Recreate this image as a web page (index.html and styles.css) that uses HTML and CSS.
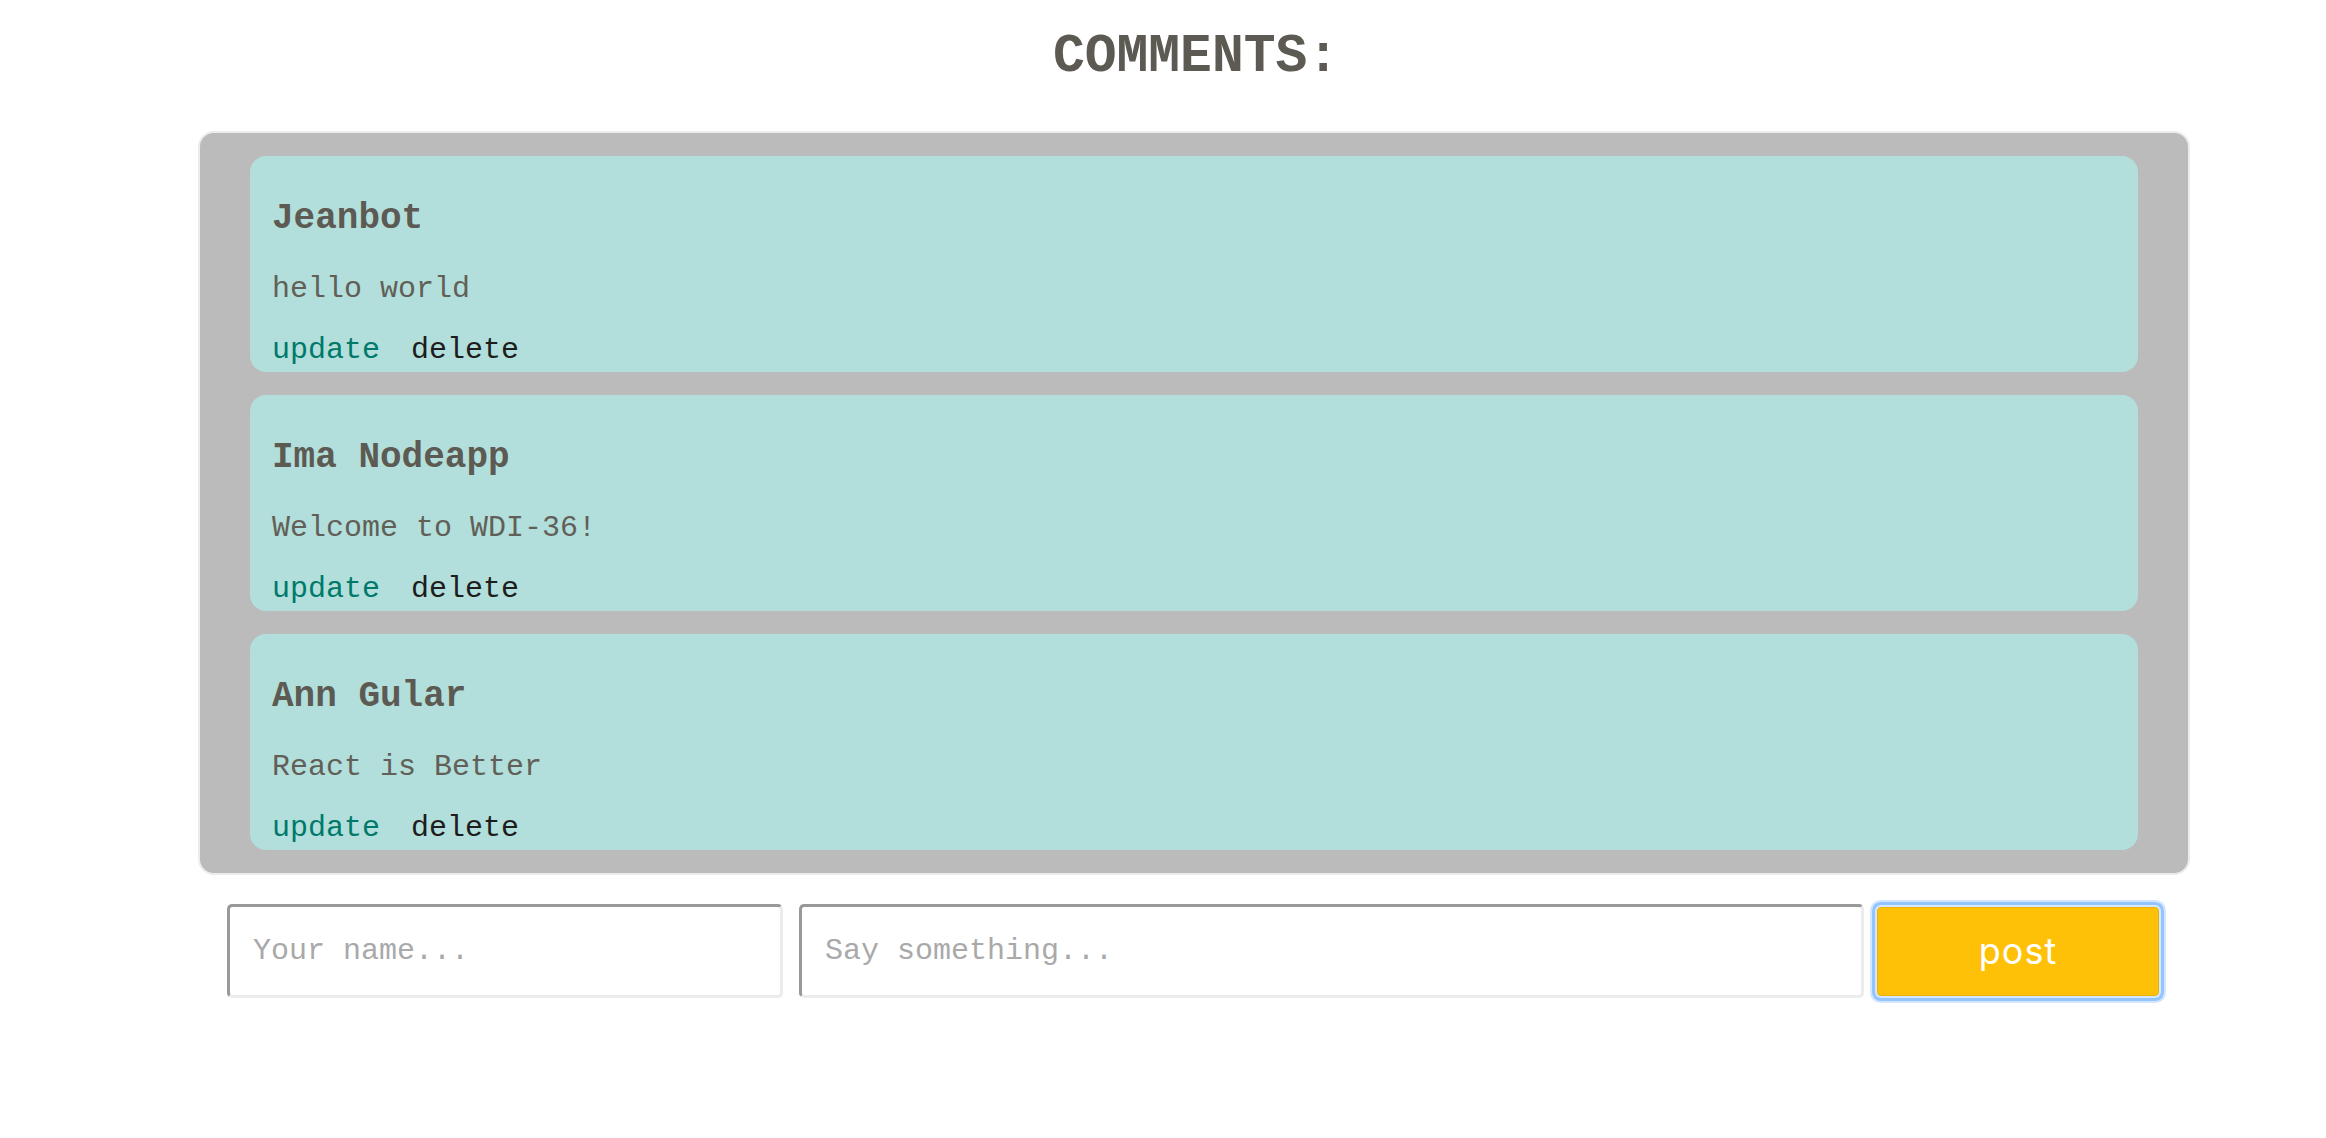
FILE: index.html
```html
<!DOCTYPE html>
<html>
<head>
<meta charset="utf-8">
<title>Comments</title>
<link rel="stylesheet" href="styles.css">
</head>
<body>
<div class="page">
  <h1 class="title">COMMENTS:</h1>
  <div class="comment-list">
    <div class="card">
      <h3 class="author">Jeanbot</h3>
      <p class="body">hello world</p>
      <div class="actions"><a class="update">update</a><a class="delete">delete</a></div>
    </div>
    <div class="card">
      <h3 class="author">Ima Nodeapp</h3>
      <p class="body">Welcome to WDI-36!</p>
      <div class="actions"><a class="update">update</a><a class="delete">delete</a></div>
    </div>
    <div class="card">
      <h3 class="author">Ann Gular</h3>
      <p class="body">React is Better</p>
      <div class="actions"><a class="update">update</a><a class="delete">delete</a></div>
    </div>
  </div>
  <form class="comment-form">
    <input class="field field-name" type="text" placeholder="Your name...">
    <input class="field field-text" type="text" placeholder="Say something...">
    <button class="post" type="button">post</button>
  </form>
</div>
</body>
</html>
```

FILE: styles.css
```css
html, body {
  margin: 0;
  padding: 0;
  background: #ffffff;
}

body {
  font-family: "Liberation Mono", "Courier New", monospace;
  padding-top: 8px;
}

.page {
  margin-left: 198px;
  width: 1992px;
}

.title {
  margin: 19px 0 43px;
  font-size: 53px;
  line-height: 61px;
  font-weight: bold;
  text-align: center;
  color: #5c5a52;
  padding-left: 4px;
}

.comment-list {
  background: #bbbbbb;
  border: 2px solid #ececec;
  border-radius: 16px;
  padding: 23px 50px;
  display: flex;
  flex-direction: column;
  gap: 23px;
}

.card {
  background: #b2dfdb;
  border-radius: 16px;
  height: 216px;
  box-sizing: border-box;
  padding: 42px 22px 0;
  overflow: hidden;
}

.author {
  margin: 0;
  font-size: 36px;
  line-height: normal;
  font-weight: bold;
  color: #5c5a52;
}

.body {
  margin: 33px 0 0;
  font-size: 30px;
  line-height: normal;
  color: #625f58;
}

.actions {
  margin-top: 27px;
  font-size: 30px;
  line-height: normal;
  display: flex;
  gap: 31px;
}

.update {
  color: #00796b;
}

.delete {
  color: #1d1d1d;
}

.comment-form {
  margin: 29px 0 0;
  padding: 0 0 8px 29px;
  display: flex;
  align-items: center;
}

.field {
  height: 94px;
  box-sizing: border-box;
  border-style: solid;
  border-width: 3px;
  border-color: #999999 #ececec #ececec #999999;
  border-radius: 5px;
  padding: 0 23px;
  font-family: "Liberation Mono", "Courier New", monospace;
  font-size: 30px;
  color: #5c5a52;
  background: #ffffff;
  outline: none;
}

.field::placeholder {
  color: #a9a9a9;
}

.field-name {
  width: 556px;
}

.field-text {
  width: 1065px;
  margin-left: 16px;
}

.post {
  margin-left: 13px;
  width: 282px;
  height: 89px;
  box-sizing: border-box;
  background: #ffc107;
  border: 1px solid #e9b20a;
  border-radius: 4px;
  box-shadow: 0 0 0 2px #d6e8ff, 0 0 0 5px #93c4fd, 0 0 0 7px #d3e6ff;
  color: #ffffff;
  font-family: Inter, "Noto Sans", sans-serif;
  font-size: 36px;
  letter-spacing: 1px;
  padding: 0;
  cursor: pointer;
}
```
